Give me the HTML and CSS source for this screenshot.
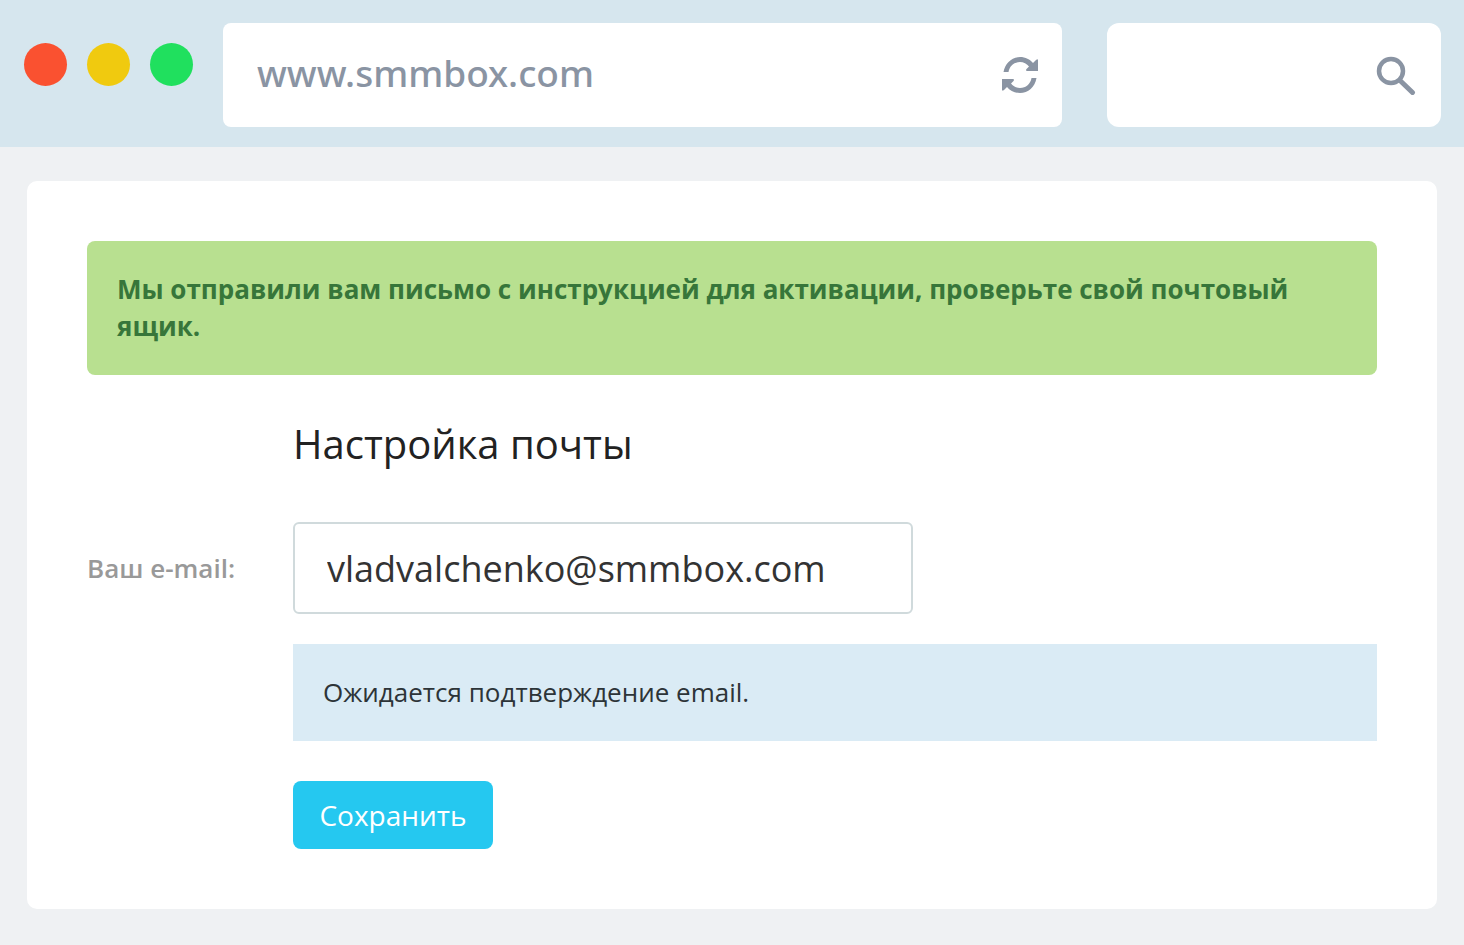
FILE: index.html
```html
<!DOCTYPE html>
<html lang="ru">
<head>
<meta charset="utf-8">
<title>Настройка почты</title>
<link rel="stylesheet" href="styles.css">
</head>
<body>
<header class="browser-bar">
  <div class="dots">
    <span class="dot dot-red"></span>
    <span class="dot dot-yellow"></span>
    <span class="dot dot-green"></span>
  </div>
  <form class="address">
    <input class="address-input" type="text" value="www.smmbox.com" aria-label="Адрес">
    <button class="icon-button" type="button" aria-label="Обновить">
      <svg width="36" height="36" viewBox="0 0 36 36" fill="#8a94a3">
        <path d="M1.5 15C3 6 10 0 18 0C23.500 0 28 2.500 31 6L34 3Q36 1.500 36 3.500V14H25.500Q23 14 24.500 12L27 9.500C25 7 21.500 5 18 5C12 5 7.500 9 6.500 15Z"/>
        <path d="M34.500 21C33 30 26 36 18 36C12.500 36 8 33.500 5 30L2 33Q0 34.500 0 32.500V22H10.500Q13 22 11.500 24L9 26.500C11 29 14.500 31 18 31C24 31 28.500 27 29.500 21Z"/>
      </svg>
    </button>
  </form>
  <form class="search">
    <input class="search-input" type="text" aria-label="Поиск">
    <button class="icon-button" type="button" aria-label="Найти">
      <svg width="40" height="40" viewBox="0 0 40 40" fill="none" stroke="#8a94a3">
        <circle cx="15" cy="16" r="12" stroke-width="4.500"/>
        <path d="M24 25.500L36.500 37.500" stroke-width="5" stroke-linecap="round"/>
      </svg>
    </button>
  </form>
</header>
<main class="page">
  <section class="card">
    <p class="alert">Мы отправили вам письмо с инструкцией для активации, проверьте свой почтовый ящик.</p>
    <form class="settings">
      <h1 class="title">Настройка почты</h1>
      <label class="label" for="email">Ваш e-mail:</label>
      <input class="email" id="email" type="email" value="vladvalchenko@smmbox.com">
      <p class="notice">Ожидается подтверждение email.</p>
      <button class="save" type="button">Сохранить</button>
    </form>
  </section>
</main>
</body>
</html>
```
FILE: styles.css
```css
* { box-sizing: border-box; }
body {
  margin: 0;
  background: #eff1f3;
  color: #222;
  font-family: "Open Sans", "Noto Sans", sans-serif;
}
input, button { font: inherit; }
.browser-bar {
  display: flex;
  padding: 23px 23px 20px 24px;
  background: #d6e6ee;
}
.dots {
  display: flex;
  gap: 20px;
  padding-top: 20px;
  margin-right: 30px;
}
.dot { width: 43px; height: 43px; border-radius: 50%; }
.dot-red { background: #fa5130; }
.dot-yellow { background: #f0ca0f; }
.dot-green { background: #20e05e; }
.address, .search {
  display: flex;
  align-items: center;
  height: 104px;
  background: #fff;
}
.address {
  flex: 1;
  margin-right: 45px;
  padding: 0 24px 0 34px;
  border-radius: 8px;
}
.search {
  width: 334px;
  padding: 0 25px;
  border-radius: 12px;
}
.address-input, .search-input {
  flex: 1;
  min-width: 0;
  padding: 0;
  border: 0;
  outline: 0;
  background: none;
}
.address-input {
  padding-bottom: 6px;
  color: #8a94a3;
  font-family: "Noto Sans", "Open Sans", sans-serif;
  font-size: 37px;
  font-weight: 500;
}
.icon-button {
  display: flex;
  padding: 0;
  border: 0;
  background: none;
}
.page { padding: 34px 27px 36px; }
.card {
  padding: 60px;
  border-radius: 10px;
  background: #fff;
}
.alert {
  margin: 0 0 41px;
  padding: 30px;
  border-radius: 8px;
  background: #b8e090;
  color: #37763a;
  font-size: 26px;
  font-weight: 700;
  line-height: 37px;
}
.settings {
  display: grid;
  grid-template-columns: 206px 1fr;
  align-items: center;
  justify-items: start;
}
.title, .notice, .save { grid-column: 2; }
.title {
  margin: 0 0 50px;
  font-size: 40px;
  font-weight: 400;
  line-height: 56px;
}
.label {
  color: #999;
  font-size: 26px;
  font-weight: 600;
}
.email {
  width: 620px;
  height: 92px;
  padding: 0 32px;
  border: 2px solid #d0dadc;
  border-radius: 6px;
  background: #fff;
  color: #333;
  font-size: 36px;
}
.notice {
  justify-self: stretch;
  margin: 30px 0 40px;
  padding: 30px;
  background: #daebf5;
  color: #2d3438;
  font-size: 26px;
  line-height: 37px;
}
.save {
  min-width: 200px;
  height: 68px;
  padding: 0 26px;
  border: 0;
  border-radius: 8px;
  background: #25c8f0;
  color: #fff;
  font-size: 28px;
  font-weight: 500;
}
```
